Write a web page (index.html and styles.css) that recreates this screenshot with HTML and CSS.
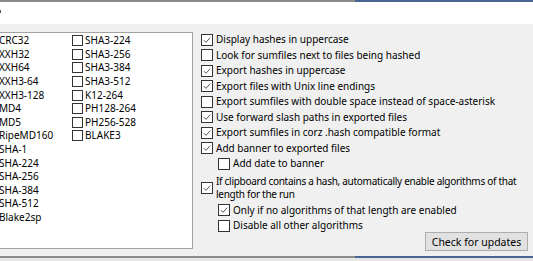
FILE: index.html
```html
<!DOCTYPE html>
<html>
<head>
<meta charset="utf-8">
<link rel="stylesheet" href="styles.css">
</head>
<body>
<div class="frame">
  <div class="edge"><span class="edge-gray"></span><span class="edge-blue"></span></div>
  <div class="header"><span class="tick"></span></div>
  <div class="main">
    <div class="listbox">
      <div class="col">
        <div class="li"><span class="cb"></span>CRC32</div>
        <div class="li"><span class="cb"></span>XXH32</div>
        <div class="li"><span class="cb"></span>XXH64</div>
        <div class="li"><span class="cb"></span>XXH3-64</div>
        <div class="li"><span class="cb"></span>XXH3-128</div>
        <div class="li"><span class="cb"></span>MD4</div>
        <div class="li"><span class="cb"></span>MD5</div>
        <div class="li"><span class="cb"></span>RipeMD160</div>
        <div class="li"><span class="cb"></span>SHA-1</div>
        <div class="li"><span class="cb"></span>SHA-224</div>
        <div class="li"><span class="cb"></span>SHA-256</div>
        <div class="li"><span class="cb"></span>SHA-384</div>
        <div class="li"><span class="cb"></span>SHA-512</div>
        <div class="li"><span class="cb"></span>Blake2sp</div>
      </div>
      <div class="col">
        <div class="li"><span class="cb"></span>SHA3-224</div>
        <div class="li"><span class="cb"></span>SHA3-256</div>
        <div class="li"><span class="cb"></span>SHA3-384</div>
        <div class="li"><span class="cb"></span>SHA3-512</div>
        <div class="li"><span class="cb"></span>K12-264</div>
        <div class="li"><span class="cb"></span>PH128-264</div>
        <div class="li"><span class="cb"></span>PH256-528</div>
        <div class="li"><span class="cb"></span>BLAKE3</div>
      </div>
    </div>
    <div class="opts">
      <div class="optlist">
        <div class="opt"><span class="cb on"><svg viewBox="0 0 12 12"><path d="M2.2 6.2 L4.8 8.8 L9.8 3.2"/></svg></span><span class="lbl">Display hashes in uppercase</span></div>
        <div class="opt"><span class="cb"></span><span class="lbl">Look for sumfiles next to files being hashed</span></div>
        <div class="opt"><span class="cb on"><svg viewBox="0 0 12 12"><path d="M2.2 6.2 L4.8 8.8 L9.8 3.2"/></svg></span><span class="lbl">Export hashes in uppercase</span></div>
        <div class="opt"><span class="cb on"><svg viewBox="0 0 12 12"><path d="M2.2 6.2 L4.8 8.8 L9.8 3.2"/></svg></span><span class="lbl">Export files with Unix line endings</span></div>
        <div class="opt"><span class="cb"></span><span class="lbl">Export sumfiles with double space instead of space-asterisk</span></div>
        <div class="opt"><span class="cb on"><svg viewBox="0 0 12 12"><path d="M2.2 6.2 L4.8 8.8 L9.8 3.2"/></svg></span><span class="lbl">Use forward slash paths in exported files</span></div>
        <div class="opt"><span class="cb on"><svg viewBox="0 0 12 12"><path d="M2.2 6.2 L4.8 8.8 L9.8 3.2"/></svg></span><span class="lbl">Export sumfiles in corz .hash compatible format</span></div>
        <div class="opt"><span class="cb on"><svg viewBox="0 0 12 12"><path d="M2.2 6.2 L4.8 8.8 L9.8 3.2"/></svg></span><span class="lbl">Add banner to exported files</span></div>
        <div class="opt sub"><span class="cb"></span><span class="lbl">Add date to banner</span></div>
        <div class="opt tall"><span class="cb on"><svg viewBox="0 0 12 12"><path d="M2.2 6.2 L4.8 8.8 L9.8 3.2"/></svg></span><span class="lbl">If clipboard contains a hash, automatically enable algorithms of that length for the run</span></div>
        <div class="opt sub"><span class="cb on"><svg viewBox="0 0 12 12"><path d="M2.2 6.2 L4.8 8.8 L9.8 3.2"/></svg></span><span class="lbl">Only if no algorithms of that length are enabled</span></div>
        <div class="opt sub"><span class="cb"></span><span class="lbl">Disable all other algorithms</span></div>
      </div>
      <button class="btn">Check for updates</button>
    </div>
  </div>
  <div class="edge"><span class="edge-gray"></span><span class="edge-blue"></span></div>
  <div class="foot"></div>
</div>
</body>
</html>
```
FILE: styles.css
```css
html, body {
  margin: 0;
  padding: 0;
  background: #f0f0f0;
}
.frame {
  width: 533px;
  height: 261px;
  overflow: hidden;
  display: flex;
  flex-direction: column;
  font-family: "Noto Sans", "Open Sans", sans-serif;
  font-size: 10px;
  color: #000;
}
.edge {
  display: flex;
  height: 2px;
  flex: none;
}
.edge-gray {
  width: 355px;
  background: #8c8c8c;
}
.edge-blue {
  flex: 1;
  background: #4a6592;
}
.header {
  height: 22px;
  flex: none;
  background: #fff;
  padding-top: 8px;
  box-sizing: border-box;
}
.tick {
  display: block;
  width: 1px;
  height: 3px;
  background: #555;
}
.main {
  height: 232px;
  flex: none;
  display: flex;
  align-items: flex-start;
  padding-top: 8px;
  box-sizing: border-box;
}
.foot {
  flex: 1;
  background: #e6e6e6;
}
.listbox {
  flex: none;
  margin-left: -21px;
  width: 214px;
  height: 217px;
  box-sizing: border-box;
  border: 1px solid #a3a3a3;
  background: #fff;
  display: flex;
  padding: 1px 0 0 6px;
}
.col {
  width: 86px;
  display: flex;
  flex-direction: column;
}
.li {
  height: 13.6px;
  display: flex;
  align-items: center;
  gap: 2px;
  white-space: nowrap;
  line-height: 13px;
}
.li .cb {
  width: 11px;
  height: 11px;
}
.cb {
  flex: none;
  width: 12px;
  height: 12px;
  box-sizing: border-box;
  border: 1px solid #333;
  background: #fff;
  display: inline-flex;
}
.cb svg {
  width: 10px;
  height: 10px;
  fill: none;
  stroke: #444;
  stroke-width: 1.1;
}
.opts {
  flex: 1;
  display: grid;
  margin-left: 8px;
  height: 224px;
}
.optlist {
  grid-area: 1 / 1;
  display: flex;
  flex-direction: column;
  width: 318px;
}
.opt {
  height: 15.5px;
  display: flex;
  align-items: center;
  gap: 3px;
  line-height: 12.6px;
  white-space: nowrap;
}
.opt.sub {
  padding-left: 17px;
}
.opt.tall {
  height: 30px;
  margin-top: 1px;
  margin-bottom: 0;
  white-space: normal;
}
.opt.tall .lbl {
  letter-spacing: -0.28px;
}
.lbl {
  flex: 1;
}
.btn {
  grid-area: 1 / 1;
  justify-self: end;
  align-self: end;
  margin: 0 5px 5px 0;
  width: 103px;
  height: 19px;
  padding: 0;
  border: 1px solid #adadad;
  background: #e1e1e1;
  font-family: "Noto Sans", "Open Sans", sans-serif;
  font-size: 10.5px;
  color: #000;
}
```
